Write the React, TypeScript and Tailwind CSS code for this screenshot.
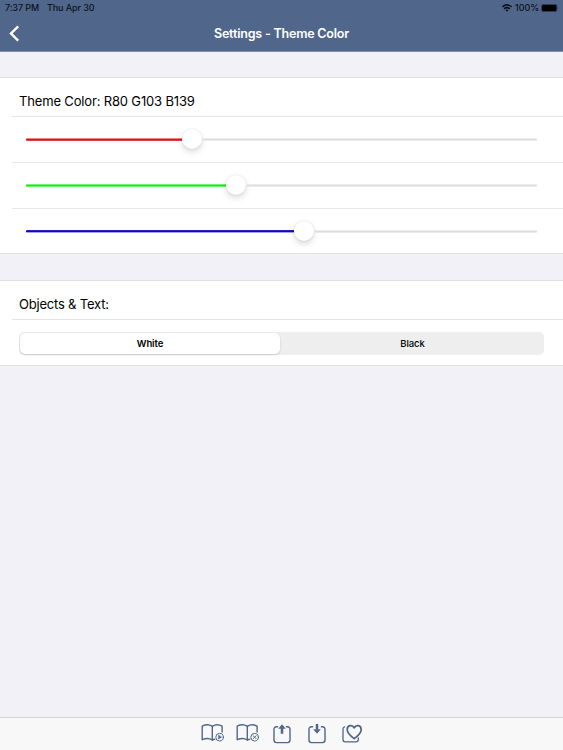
import React from 'react';

type Channel = { name: string; value: number; fill: string; row: string };

const channels: Channel[] = [
  { name: 'Red level', value: 166, fill: 'bg-[linear-gradient(#f28080_33%,#d41818_33%_67%,#e23c3c_67%)]', row: 'h-[46px] border-b' },
  { name: 'Green level', value: 210, fill: 'bg-[linear-gradient(#6cf56c_33%,#1ee41e_33%_67%,#62f862_67%)]', row: 'h-[46px] border-b' },
  { name: 'Blue level', value: 278, fill: 'bg-[linear-gradient(#231cc8_33%,#0c04dc_33%_67%,#a5a3f5_67%)]', row: 'h-[44px]' },
];

function SliderRow({ channel }: { channel: Channel }) {
  return (
    <div className={`ml-3 flex items-center border-[#e8e8ea] pr-[26px] pl-[14px] ${channel.row}`}>
      <div className="flex h-[21px] w-full items-center" role="slider" aria-label={channel.name} aria-valuenow={channel.value}>
        <div className={`h-[3px] shrink-0 rounded-l-[1px] ${channel.fill}`} style={{ width: channel.value - 10 }} />
        <div className="-mt-px size-[20px] shrink-0 rounded-full bg-white shadow-[0_3px_6px_rgba(0,0,0,0.15),0_0_2px_rgba(0,0,0,0.12)]" />
        <div className="h-[3px] flex-1 rounded-r-[1px] bg-[linear-gradient(#ececec_33%,#dedede_33%_67%,#ebebeb_67%)]" />
      </div>
    </div>
  );
}

function BookIcon({ mark }: { mark: 'play' | 'close' }) {
  return (
    <svg className="-mt-px h-[20px] w-[24px]" viewBox="-1 0 24 20" fill="none" stroke="#50678b" strokeWidth="1.4" strokeLinejoin="round" strokeLinecap="round">
      <path d="M13.8 16.2 11.3 17 C8.8 15.3 4.5 15.3 1.2 16.7 V3.2 C4.5 1.5 8.5 1.5 11.3 3.3 C14.2 1.5 18.2 1.5 21.1 3.2 V9" />
      <path d="M11.3 3.3V17" />
      <circle cx="18.6" cy="14.2" r="3.8" strokeWidth="1" />
      {mark === 'play' ? (
        <path d="M17.5 12.3v3.8l3-1.9z" fill="#50678b" strokeWidth=".5" />
      ) : (
        <path d="m17.1 12.7 3 3m0-3-3 3" strokeWidth="1" />
      )}
    </svg>
  );
}

function BoxArrowIcon({ up }: { up?: boolean }) {
  return (
    <svg className="h-[20px] w-[18px]" viewBox="0 0 18 20" fill="none" stroke="#50678b" strokeWidth="1.4" strokeLinecap="round">
      <path d="M4.6 2.8H3.5Q1 2.8 1 5.3V16.1Q1 18.6 3.5 18.6H14.5Q17 18.6 17 16.1V5.3Q17 2.8 14.5 2.8H13.4" />
      {up ? (
        <>
          <path d="M9 4V9.8" strokeWidth="2.5" strokeLinecap="butt" />
          <path d="M9 .2 12.8 4.8H5.2Z" fill="#50678b" stroke="none" />
        </>
      ) : (
        <>
          <path d="M9 0V5.5" strokeWidth="2.5" strokeLinecap="butt" />
          <path d="M9 9.8 12.8 5.2H5.2Z" fill="#50678b" stroke="none" />
        </>
      )}
    </svg>
  );
}

function HeartIcon() {
  return (
    <svg className="h-[20px] w-[20px]" viewBox="0 0 20 20" fill="none" stroke="#50678b" strokeLinejoin="round" strokeLinecap="round">
      <path d="M2.6 2.8Q1 3.2 1 5V15.6Q1 17.9 3.3 17.9H14Q16.3 17.9 16.3 15.6V13.8" strokeWidth="1.3" />
      <path d="M12.2 14.6C8.2 11.6 5.2 9 5.2 5.7C5.2 1 10.4.2 12.2 3.9C14 .2 19.2 1 19.2 5.7C19.2 9 16.2 11.6 12.2 14.6Z" strokeWidth="1.7" />
    </svg>
  );
}

export default function App() {
  return (
    <div className="flex h-[750px] w-[563px] flex-col overflow-hidden bg-[#f2f1f7] font-['Inter',sans-serif] text-black">
      <header className="h-[52px] shrink-0 border-b border-[#8390aa] bg-[#50678b]">
        <div className="flex h-[15px] items-center justify-between pr-[4px] pl-[5px] text-[9px] leading-[15px] font-medium text-[#0c121c]">
          <div className="flex gap-[8px]">
            <span className="w-[34px] tracking-[-0.1px] whitespace-nowrap">7:37 PM</span>
            <span className="tracking-[-0.1px] whitespace-nowrap">Thu Apr 30</span>
          </div>
          <div className="flex items-center">
            <svg className="mr-[3px] h-[8px] w-[10px]" viewBox="0 0 10 8" fill="none" stroke="#0c121c" strokeWidth="1.5">
              <path d="M.4 3Q5-1.2 9.6 3M2.1 4.9Q5 2.4 7.9 4.9" />
              <path d="M5 7.8 3.5 6.2Q5 5 6.5 6.2Z" fill="#0c121c" stroke="none" />
            </svg>
            <span className="mr-[2px] tracking-[-0.1px]">100%</span>
            <svg className="h-[8px] w-[18px]" viewBox="0 0 18 8">
              <rect x=".1" y=".1" width="16.2" height="7.8" rx="2" fill="#0c121c" fillOpacity=".5" />
              <rect x="1.1" y="1.1" width="14.2" height="5.8" rx="1.2" fill="#000" />
              <path d="M17 2.7q1 1.3 0 2.6z" fill="#0c121c" fillOpacity=".6" />
            </svg>
          </div>
        </div>
        <div className="grid h-[36px] grid-cols-[40px_1fr_40px] items-center">
          <svg className="ml-[9px] h-[17px] w-[11px]" viewBox="0 0 11 17" fill="none" stroke="white" strokeWidth="2.4">
            <path d="M9.2 1.3 2 8.5l7.2 7.2" />
          </svg>
          <h1 className="pt-[3px] text-center text-[12.5px] font-semibold tracking-[-0.2px] whitespace-nowrap text-white">Settings - Theme Color</h1>
        </div>
      </header>

      <section className="mt-[25px] h-[177px] shrink-0 border-y border-[#dfdfe4] bg-white">
        <div className="ml-3 flex h-[39px] items-center border-b border-[#e4e4e6] pt-[9px] pl-[7px] text-[13px] tracking-[-0.16px]">
          <h2 className="whitespace-nowrap">Theme Color: R80 G103 B139</h2>
        </div>
        {channels.map((channel) => (
          <SliderRow key={channel.name} channel={channel} />
        ))}
      </section>

      <section className="mt-[26px] h-[86px] shrink-0 border-y border-[#dfdfe4] bg-white">
        <div className="ml-3 flex h-[39px] items-center border-b border-[#e4e4e6] pt-[9px] pl-[7px] text-[13px] tracking-[-0.2px]">
          <h2 className="whitespace-nowrap">Objects &amp; Text:</h2>
        </div>
        <div className="mt-[12px] mr-[19px] ml-[19px] grid h-[23px] grid-cols-[260px_1fr] rounded-[5px] bg-[#eeeeef] p-px text-[9.5px]">
          <button className="rounded-[5px] bg-white pt-px font-semibold tracking-[-0.1px] shadow-[0_1px_2px_rgba(0,0,0,0.15),0_0_1px_rgba(0,0,0,0.12)]">White</button>
          <button className="pt-px pl-[2px] font-medium tracking-[-0.1px]">Black</button>
        </div>
      </section>

      <footer className="mt-auto flex h-[33px] shrink-0 justify-center border-t border-[#d3d3d7] bg-[#f8f8f8] pt-[6px]">
        <nav className="grid w-[175px] grid-cols-5 justify-items-center">
          <BookIcon mark="play" />
          <BookIcon mark="close" />
          <BoxArrowIcon up />
          <BoxArrowIcon />
          <HeartIcon />
        </nav>
      </footer>
    </div>
  );
}
